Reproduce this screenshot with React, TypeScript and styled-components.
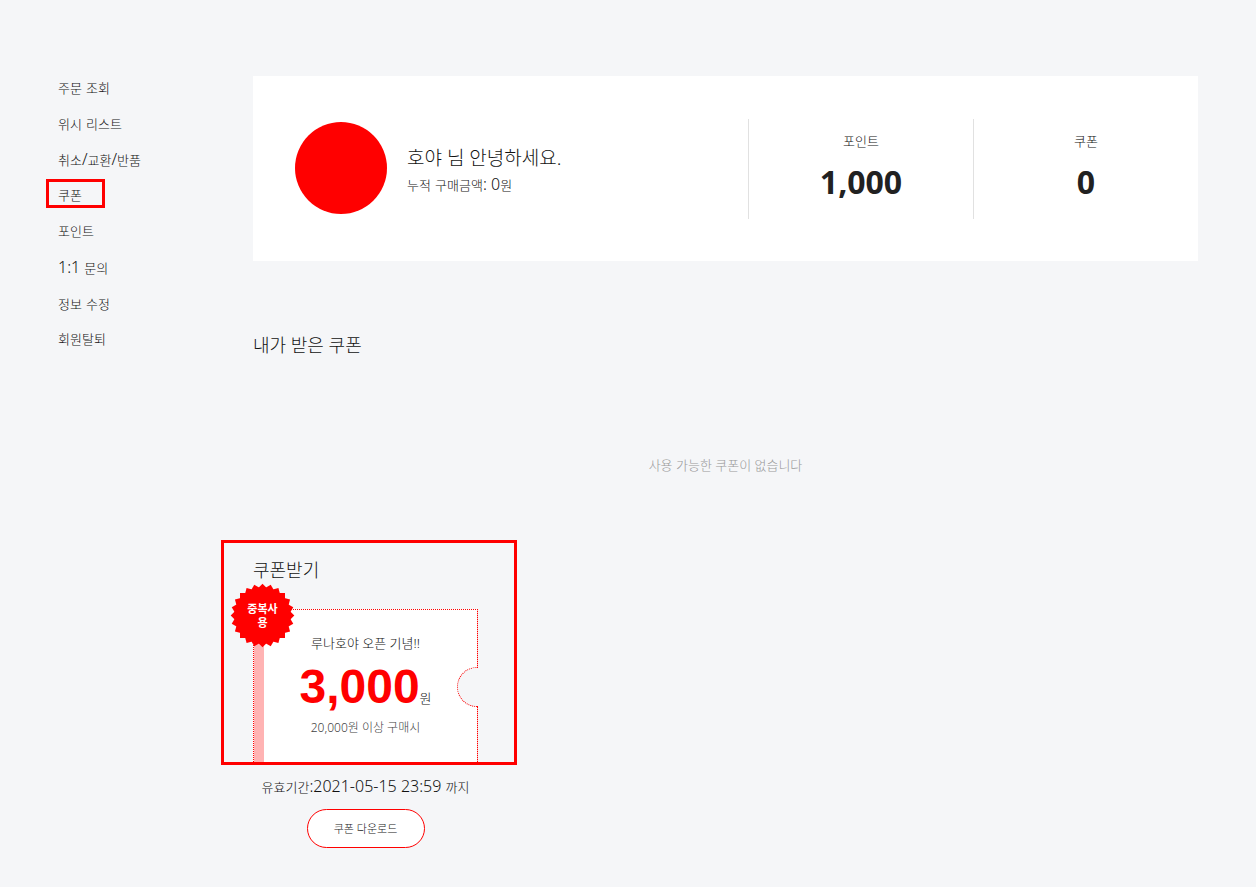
import React from 'react';
import styled, { createGlobalStyle } from 'styled-components';

const Global = createGlobalStyle`
  *, *::before, *::after { box-sizing: border-box; }
  body {
    margin: 0;
    background: #f5f6f8;
    color: #111;
    font-family: 'Noto Sans', 'Noto Sans CJK KR', sans-serif;
    font-size: 13px;
    font-weight: 300;
    line-height: 20px;
  }
  h1, h2, p, ul, dl, dd { margin: 0; padding: 0; font-weight: inherit; }
`;

const Page = styled.div`
  display: flex;
  align-items: flex-start;
  padding: 76px 58px 39px;
`;

const Sidebar = styled.nav`
  flex: 0 0 195px;
`;

const MenuList = styled.ul`
  display: flex;
  flex-direction: column;
  align-items: flex-start;
  gap: 16px;
  list-style: none;
  padding-top: 1px;
`;

const MenuItem = styled.li<{ $marked?: boolean }>`
  position: relative;
  height: 20px;
  ${(p) =>
    p.$marked &&
    `&::after {
      content: '';
      position: absolute;
      inset: -6px -23px -3px -12px;
      border: 3px solid #ff0000;
      pointer-events: none;
    }`}
`;

const MenuLink = styled.a`
  color: inherit;
  text-decoration: none;
`;

const Latin = styled.span`
  font-size: 16px;
`;

const Main = styled.main`
  flex: 1;
  min-width: 0;
`;

const Profile = styled.section`
  display: flex;
  align-items: center;
  padding: 43px 0 42px 42px;
  background: #fff;
`;

const Avatar = styled.div`
  width: 92px;
  height: 92px;
  margin: 0 20px 2px 0;
  border-radius: 50%;
  background: #ff0000;
`;

const Greeting = styled.div`
  flex: 1;
  padding-top: 2px;
`;

const Hello = styled.h1`
  font-size: 19px;
  line-height: 28px;
`;

const Total = styled.p`
  line-height: 24px;
`;

const Stats = styled.dl`
  display: flex;
  margin: 0;
`;

const Stat = styled.div`
  width: 225px;
  height: 100px;
  padding-top: 12px;
  border-left: 1px solid #e1e1e1;
  text-align: center;
`;

const StatValue = styled.dd`
  color: #212121;
  font-size: 32px;
  font-weight: 700;
  line-height: 44px;
  padding-top: 9px;
`;

const Title = styled.h2`
  font-size: 18px;
  line-height: 28px;
`;

const MyCoupons = styled.section`
  padding-top: 70px;
`;

const Empty = styled.p`
  padding: 96px 0 81px;
  color: #999;
  text-align: center;
`;

const GetCoupons = styled.section`
  position: relative;
  width: 225px;
  &::after {
    content: '';
    position: absolute;
    top: -16px;
    left: -32px;
    width: 296px;
    height: 225px;
    border: 3px solid #ff0000;
    pointer-events: none;
  }
`;

const Ticket = styled.article`
  position: relative;
  height: 155px;
  margin-top: 25px;
  padding-top: 23px;
  border: 1px dotted #ff0000;
  background: linear-gradient(to right, #ffb3b3 10px, #fff 10px);
  text-align: center;
`;

const Notch = styled.span`
  position: absolute;
  top: 57px;
  right: -1px;
  width: 21px;
  height: 40px;
  border: 1px dotted #ff0000;
  border-right: 0;
  border-radius: 20px 0 0 20px;
  background: #f5f6f8;
`;

const Badge = styled.span`
  position: absolute;
  top: -27px;
  left: -24px;
  display: flex;
  align-items: center;
  justify-content: center;
  width: 65px;
  height: 65px;
  svg {
    position: absolute;
    inset: 0;
  }
`;

const BadgeText = styled.strong`
  position: relative;
  width: 32px;
  color: #fff;
  font-size: 11px;
  font-weight: 700;
  line-height: 14px;
`;

const Amount = styled.p`
  display: flex;
  align-items: baseline;
  justify-content: center;
  padding-top: 6px;
`;

const AmountValue = styled.strong`
  color: #ff0000;
  font-family: 'Liberation Sans', sans-serif;
  font-size: 48px;
  font-weight: 700;
  line-height: 56px;
`;

const Condition = styled.p`
  padding-top: 3px;
  color: #424242;
  font-size: 12px;
`;

const Expiry = styled.p`
  padding-top: 12px;
  text-align: center;
`;

const Download = styled.button`
  display: block;
  width: 118px;
  height: 39px;
  margin: 12px auto 0;
  border: 1px solid #ff0000;
  border-radius: 20px;
  background: #fff;
  color: #212121;
  font: inherit;
  font-size: 11px;
`;

const menu = [
  '주문 조회',
  '위시 리스트',
  '취소/교환/반품',
  '쿠폰',
  '포인트',
  '1:1 문의',
  '정보 수정',
  '회원탈퇴',
];

/* Sets the runs of digits, punctuation and spaces a step larger than the Hangul. */
function Mixed({ text }: { text: string }) {
  return (
    <>
      {text.split(/([^가-힣]+)/).map((run, i) => (i % 2 ? <Latin key={i}>{run}</Latin> : run))}
    </>
  );
}

function Burst() {
  return (
    <svg viewBox="0 0 65 65" width="65" height="65" fill="#ff0000" aria-hidden="true">
      {[0, 15, 30, 45, 60, 75].map((a) => (
        <rect key={a} x="10" y="10" width="45" height="45" transform={`rotate(${a} 32.5 32.5)`} />
      ))}
    </svg>
  );
}

export default function App() {
  return (
    <>
      <Global />
      <Page>
        <Sidebar>
          <MenuList>
            {menu.map((label) => (
              <MenuItem key={label} $marked={label === '쿠폰'}>
                <MenuLink href="#">
                  <Mixed text={label} />
                </MenuLink>
              </MenuItem>
            ))}
          </MenuList>
        </Sidebar>
        <Main>
          <Profile>
            <Avatar />
            <Greeting>
              <Hello>호야 님 안녕하세요.</Hello>
              <Total>
                <Mixed text="누적 구매금액: 0원" />
              </Total>
            </Greeting>
            <Stats>
              <Stat>
                <dt>포인트</dt>
                <StatValue>1,000</StatValue>
              </Stat>
              <Stat>
                <dt>쿠폰</dt>
                <StatValue>0</StatValue>
              </Stat>
            </Stats>
          </Profile>
          <MyCoupons>
            <Title>내가 받은 쿠폰</Title>
            <Empty>사용 가능한 쿠폰이 없습니다</Empty>
          </MyCoupons>
          <GetCoupons>
            <Title>쿠폰받기</Title>
            <Ticket>
              <Notch />
              <Badge>
                <Burst />
                <BadgeText>중복사<br />용</BadgeText>
              </Badge>
              <p>루나호야 오픈 기념!!</p>
              <Amount><AmountValue>3,000</AmountValue>원</Amount>
              <Condition>20,000원 이상 구매시</Condition>
            </Ticket>
            <Expiry>
              <Mixed text="유효기간:2021-05-15 23:59 까지" />
            </Expiry>
            <Download type="button">쿠폰 다운로드</Download>
          </GetCoupons>
        </Main>
      </Page>
    </>
  );
}
